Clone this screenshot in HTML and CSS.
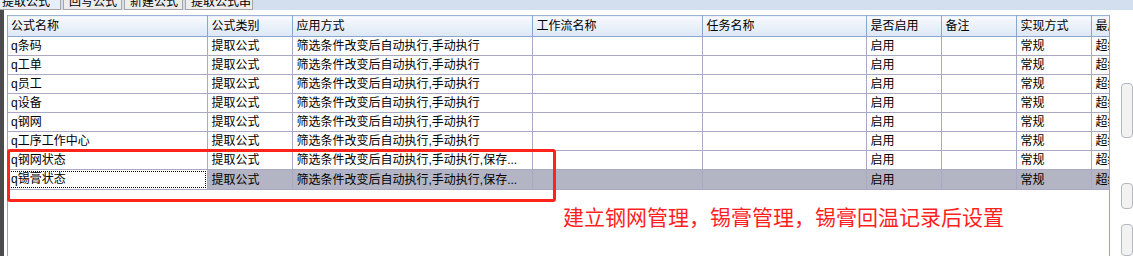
FILE: index.html
```html
<!DOCTYPE html>
<html lang="zh-CN">
<head>
  <meta charset="UTF-8" />
  <title>公式管理</title>
  <link rel="stylesheet" href="styles.css">
</head>
<body>
  <div class="tabbar">
    <div class="tab active">提取公式</div>
    <div class="tab">回写公式</div>
    <div class="tab">新建公式</div>
    <div class="tab">提取公式串</div>
  </div>

  <div class="workspace">
    <div class="side-strip"></div>
    <div class="grid-wrap">
      <table class="grid">
        <colgroup>
          <col style="width:200px"><col style="width:85px"><col style="width:240px">
          <col style="width:170px"><col style="width:164px"><col style="width:75px">
          <col style="width:75px"><col style="width:75px"><col style="width:75px">
        </colgroup>
        <thead>
          <tr>
            <th>公式名称</th><th>公式类别</th><th>应用方式</th><th>工作流名称</th><th>任务名称</th>
            <th>是否启用</th><th>备注</th><th>实现方式</th><th>最后修改人</th>
          </tr>
        </thead>
        <tbody>
          <tr><td>q条码</td><td>提取公式</td><td>筛选条件改变后自动执行,手动执行</td><td></td><td></td><td>启用</td><td></td><td>常规</td><td>超级用户</td></tr>
          <tr><td>q工单</td><td>提取公式</td><td>筛选条件改变后自动执行,手动执行</td><td></td><td></td><td>启用</td><td></td><td>常规</td><td>超级用户</td></tr>
          <tr><td>q员工</td><td>提取公式</td><td>筛选条件改变后自动执行,手动执行</td><td></td><td></td><td>启用</td><td></td><td>常规</td><td>超级用户</td></tr>
          <tr><td>q设备</td><td>提取公式</td><td>筛选条件改变后自动执行,手动执行</td><td></td><td></td><td>启用</td><td></td><td>常规</td><td>超级用户</td></tr>
          <tr><td>q钢网</td><td>提取公式</td><td>筛选条件改变后自动执行,手动执行</td><td></td><td></td><td>启用</td><td></td><td>常规</td><td>超级用户</td></tr>
          <tr><td>q工序工作中心</td><td>提取公式</td><td>筛选条件改变后自动执行,手动执行</td><td></td><td></td><td>启用</td><td></td><td>常规</td><td>超级用户</td></tr>
          <tr><td>q钢网状态</td><td>提取公式</td><td>筛选条件改变后自动执行,手动执行,保存...</td><td></td><td></td><td>启用</td><td></td><td>常规</td><td>超级用户</td></tr>
          <tr class="selected"><td class="focus"><span>q锡膏状态</span></td><td>提取公式</td><td>筛选条件改变后自动执行,手动执行,保存...</td><td></td><td></td><td>启用</td><td></td><td>常规</td><td>超级用户</td></tr>
        </tbody>
      </table>
    </div>
    <div class="side-panel">
      <div class="side-btn big"></div>
      <div class="side-btn mid"></div>
      <div class="side-btn small"></div>
    </div>
  </div>

  <div class="mark-box"></div>
  <div class="mark-note">建立钢网管理，锡膏管理，锡膏回温记录后设置</div>
</body>
</html>
```

FILE: styles.css
```css
* {
  box-sizing: border-box;
}

html, body {
  margin: 0;
  height: 256px;
  overflow: hidden;
  background: #ffffff;
}

body {
  font-family: "Liberation Sans", "Noto Sans CJK SC", sans-serif;
  font-size: 12px;
  color: #000;
  position: relative;
}

/* tab strip, cut off at the top */
.tabbar {
  height: 10px;
  background: #d3deee;
  display: flex;
  overflow: hidden;
}

.tab {
  width: 59px;
  height: 10px;
  line-height: 4px;
  padding-left: 5px;
  margin-right: 2px;
  background: #ededed;
  border: 1px solid #a6a6a6;
  border-top: none;
  white-space: nowrap;
}

.tab.active {
  width: 61px;
  background: #e9eef6;
  padding-left: 2px;
  border-left: none;
}

.tab:last-child {
  width: 68px;
}

.workspace {
  display: flex;
  height: 246px;
}

.side-strip {
  width: 4px;
  background: #4b4b4b;
  margin-right: 3px;
}

.grid-wrap {
  width: 1109px;
  margin-top: 5px;
  border-left: 1px solid #9aa4bf;
  border-right: 1px solid #9aa4bf;
  overflow: hidden;
  background: #fff;
}

.grid {
  table-layout: fixed;
  border-collapse: collapse;
  width: 1159px;
}

.grid th,
.grid td {
  height: 19px;
  padding: 0 0 0 3px;
  text-align: left;
  font-weight: normal;
  white-space: nowrap;
  overflow: hidden;
  line-height: 18px;
}

.grid th {
  height: 21px;
  background: linear-gradient(#f8fafd, #dce7f6);
  border-top: 1px solid #9db3d3;
  border-bottom: 1px solid #8ba6cb;
  border-right: 1px solid #8ba6cb;
}

.grid td {
  border-bottom: 1px solid #a9a9c5;
  border-right: 1px solid #a9a9c5;
}

.grid tr.selected td {
  background: #b3b5c4;
}

.grid tr.selected td.focus {
  background: #ffffff;
  padding: 1px;
}

.grid td.focus span {
  display: block;
  height: 17px;
  line-height: 15px;
  padding-left: 1px;
  border: 1px dotted #000;
}

.side-panel {
  flex: 1;
  display: flex;
  flex-direction: column;
  padding-left: 11px;
}

.side-btn {
  width: 12px;
  background: #f2f2f2;
  border: 1px solid #b4b8c0;
  border-radius: 4px;
}

.side-btn.big {
  margin-top: 73px;
  height: 69px;
}

.side-btn.mid {
  margin-top: 45px;
  height: 33px;
}

.side-btn.small {
  margin-top: 15px;
  height: 40px;
}

/* red annotation drawn over the grid */
.mark-box {
  position: absolute;
  left: 7px;
  top: 149px;
  width: 549px;
  height: 53px;
  border: 3px solid #ff2419;
  border-radius: 3px;
}

.mark-note {
  position: absolute;
  left: 563px;
  top: 204px;
  font-family: "Noto Sans CJK SC", sans-serif;
  font-size: 21px;
  line-height: 24px;
  color: #ff1f1f;
  white-space: nowrap;
}
```
